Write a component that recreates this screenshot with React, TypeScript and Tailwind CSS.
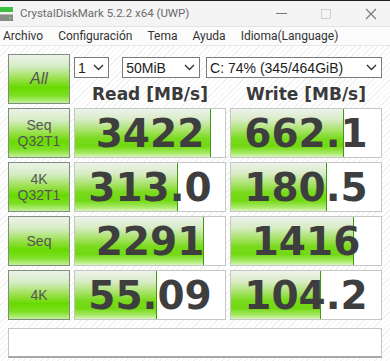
import React from "react";

type Row = {
  label: string[];
  read: string;
  readFill: number;
  write: string;
  writeFill: number;
};

const rows: Row[] = [
  { label: ["Seq", "Q32T1"], read: "3422", readFill: 136, write: "662.1", writeFill: 113 },
  { label: ["4K", "Q32T1"], read: "313.0", readFill: 103, write: "180.5", writeFill: 96 },
  { label: ["Seq"], read: "2291", readFill: 129, write: "1416", writeFill: 123 },
  { label: ["4K"], read: "55.09", readFill: 82, write: "104.2", writeFill: 90 },
];

const menu = ["Archivo", "Configuración", "Tema", "Ayuda", "Idioma(Language)"];

const Chevron = () => (
  <svg width="11" height="7" viewBox="0 0 11 7" className="shrink-0">
    <path d="M1 1 L5.5 5.5 L10 1" fill="none" stroke="#333" strokeWidth="1.4" />
  </svg>
);

const Select = ({ text, width }: { text: string; width: string }) => (
  <div
    className={`${width} h-[21px] bg-white border border-[#7a7a7a] flex items-center justify-between pl-[3px] pr-[4px] text-[14px] text-[#222] font-['Liberation_Sans',sans-serif]`}
  >
    <span className="leading-none">{text}</span>
    <Chevron />
  </div>
);

const LabelButton = ({ children }: { children: React.ReactNode }) => (
  <div className="h-[50px] border border-[#7f8e7f] bg-[linear-gradient(to_bottom,#edf2ea_0%,#d3ecc0_25%,#98e048_50%,#68da00_68%,#7ee024_85%,#c4f09a_100%)] flex flex-col items-center justify-center text-[#555] font-['Liberation_Sans',sans-serif]">
    {children}
  </div>
);

const ValueBox = ({ value, fill }: { value: string; fill: number }) => (
  <div className="relative h-[50px] bg-white border border-[#c6c6c6] overflow-hidden">
    <div
      className="absolute left-0 top-0 bottom-0 border-r border-[#3f9a12] bg-[linear-gradient(to_bottom,#eef2ec_0%,#d8ecc6_22%,#a6e266_45%,#78da1c_62%,#72d812_78%,#a8ea68_92%,#d8f6bc_100%)]"
      style={{ width: fill }}
    />
    <div className="relative h-full flex items-center justify-center text-[39px] leading-none font-bold text-[#3e3e3e] font-['DejaVu_Sans',sans-serif]">
      {value}
    </div>
  </div>
);

export default function App() {
  return (
    <div className="w-[390px] h-[361px] overflow-hidden flex flex-col bg-white">
      {/* title bar */}
      <div className="h-[26px] shrink-0 border-t border-[#1e1e1e] bg-[#f4f4f4] flex items-center font-['Roboto',sans-serif]">
        <svg width="14" height="16" viewBox="0 0 14 16" className="shrink-0">
          <rect x="0" y="1" width="13" height="5" fill="#3fbf3f" />
          <rect x="0" y="6" width="13" height="1" fill="#e6f5e6" />
          <rect x="0" y="8" width="13" height="7" fill="#8a8a8a" />
          <rect x="0" y="8" width="13" height="1" fill="#b4b4b4" />
          <rect x="9" y="11" width="2" height="2" fill="#5fe05f" />
        </svg>
        <span className="ml-[6px] text-[11.5px] text-[#6b6b6b]">CrystalDiskMark 5.2.2 x64 (UWP)</span>
        <div className="flex-1" />
        <div className="w-[11px] h-px bg-[#777] mr-[34px]" />
        <div className="w-[10px] h-[10px] border border-[#d0d0d0] mr-[34px]" />
        <svg width="12" height="12" viewBox="0 0 12 12" className="mr-[13px]">
          <path d="M1 1 L11 11 M11 1 L1 11" stroke="#777" strokeWidth="1.1" />
        </svg>
      </div>

      {/* menu bar */}
      <div className="h-[19px] shrink-0 bg-[#fbfbfb] border-t border-[#e4e4e4] flex items-center gap-[15px] pl-[3px] text-[12px] text-[#333] font-['Roboto',sans-serif]">
        {menu.map((m) => (
          <span key={m}>{m}</span>
        ))}
      </div>

      {/* body */}
      <div className="flex-1 border-t border-[#e8e8e8] bg-[repeating-linear-gradient(135deg,#ffffff_0px,#ffffff_3px,#f1f1f1_3px,#f1f1f1_4px)] pl-[8px] pt-[8px]">
        <div className="grid grid-cols-[62px_152px_152px] gap-[4px]">
          <LabelButton>
            <span className="italic text-[16px] text-[#555]">All</span>
          </LabelButton>
          <div className="col-span-2 flex flex-col">
            <div className="flex mt-[3px] gap-[6px]">
              <Select text="1" width="w-[36px]" />
              <div className="w-px" />
              <Select text="50MiB" width="w-[80px]" />
              <Select text="C: 74% (345/464GiB)" width="w-[181px]" />
            </div>
            <div className="grid grid-cols-2 gap-[4px] mt-[6px] text-[17px] leading-[20px] font-bold text-[#3a3a3a] font-['DejaVu_Sans',sans-serif]">
              <div className="text-center">Read [MB/s]</div>
              <div className="text-center">Write [MB/s]</div>
            </div>
          </div>

          {rows.map((r) => (
            <React.Fragment key={r.read}>
              <LabelButton>
                {r.label.map((l) => (
                  <span key={l} className="text-[14px] leading-[16px]">
                    {l}
                  </span>
                ))}
              </LabelButton>
              <ValueBox value={r.read} fill={r.readFill} />
              <ValueBox value={r.write} fill={r.writeFill} />
            </React.Fragment>
          ))}
        </div>

        <div className="mt-[8px] w-[374px] h-[30px] bg-white border border-[#c4c4c4] border-b-2 border-b-[#a8a8a8]" />
      </div>
    </div>
  );
}
